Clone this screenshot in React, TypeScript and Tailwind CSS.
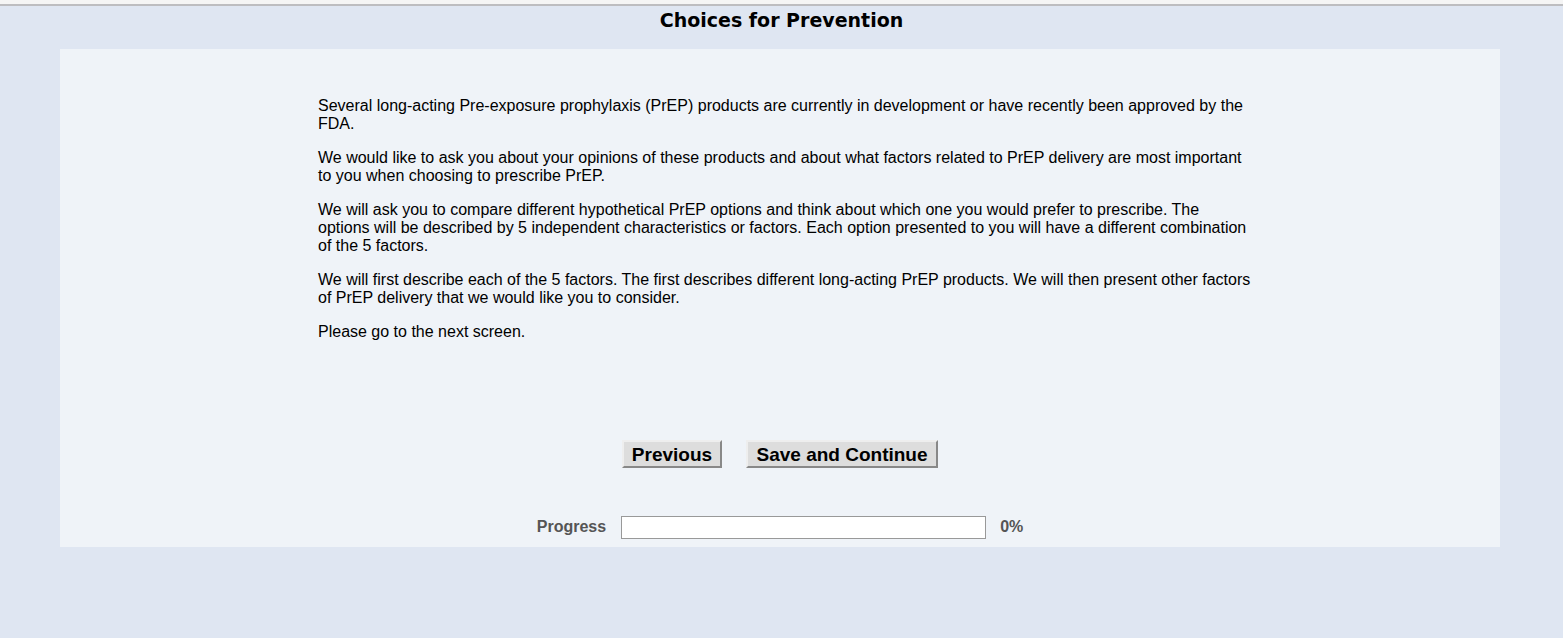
import React from 'react'

const paragraphs = [
  'Several long-acting Pre-exposure prophylaxis (PrEP) products are currently in development or have recently been approved by the FDA.',
  'We would like to ask you about your opinions of these products and about what factors related to PrEP delivery are most important to you when choosing to prescribe PrEP.',
  'We will ask you to compare different hypothetical PrEP options and think about which one you would prefer to prescribe. The options will be described by 5 independent characteristics or factors. Each option presented to you will have a different combination of the 5 factors.',
  'We will first describe each of the 5 factors. The first describes different long-acting PrEP products. We will then present other factors of PrEP delivery that we would like you to consider.',
  'Please go to the next screen.'
]

export default function App() {
  return (
    <div className="min-h-[638px] bg-[#dfe6f2] font-['Liberation_Sans',Arial,sans-serif]">
      {/* browser chrome strip */}
      <div className="h-[4px] bg-[#f5f5f5]" />
      <div className="h-[2px] bg-[#bdbdc0]" />

      {/* Header */}
      <div className="h-[43px] flex justify-center pt-[2px]">
        <h1 className="font-['DejaVu_Sans',Verdana,sans-serif] font-bold text-[19px] leading-[24px] text-black">
          Choices for Prevention
        </h1>
      </div>

      {/* Survey panel */}
      <div className="ml-[60px] mr-[63px] bg-[#eff3f8] pt-[48px] pb-[8px]">
        <div className="w-[956px] mx-auto pl-[16px] pr-[4px] text-[16px] leading-[18px] text-black">
          {paragraphs.map((p, i) => (
            <p key={i} className={i < paragraphs.length - 1 ? 'mb-[16px]' : ''}>
              {p}
            </p>
          ))}
        </div>

        {/* Nav buttons */}
        <div className="flex justify-center gap-[24px] mt-[99px]">
          <button className="h-[28px] w-[100px] bg-[#dddddd] border-2 border-t-[#eeeeee] border-l-[#eeeeee] border-b-[#888888] border-r-[#888888] text-[19px] font-bold text-black leading-none">
            Previous
          </button>
          <button className="h-[28px] w-[192px] bg-[#dddddd] border-2 border-t-[#eeeeee] border-l-[#eeeeee] border-b-[#888888] border-r-[#888888] text-[19px] font-bold text-black leading-none">
            Save and Continue
          </button>
        </div>

        {/* Progress */}
        <div className="flex justify-center items-center mt-[47px] gap-[15px]">
          <span className="text-[16px] font-bold text-[#555555]">Progress</span>
          <div className="w-[365px] h-[23px] bg-white border border-[#999999]" />
          <span className="text-[16px] font-bold text-[#555555] -ml-[1px]">0%</span>
        </div>
      </div>
    </div>
  )
}
